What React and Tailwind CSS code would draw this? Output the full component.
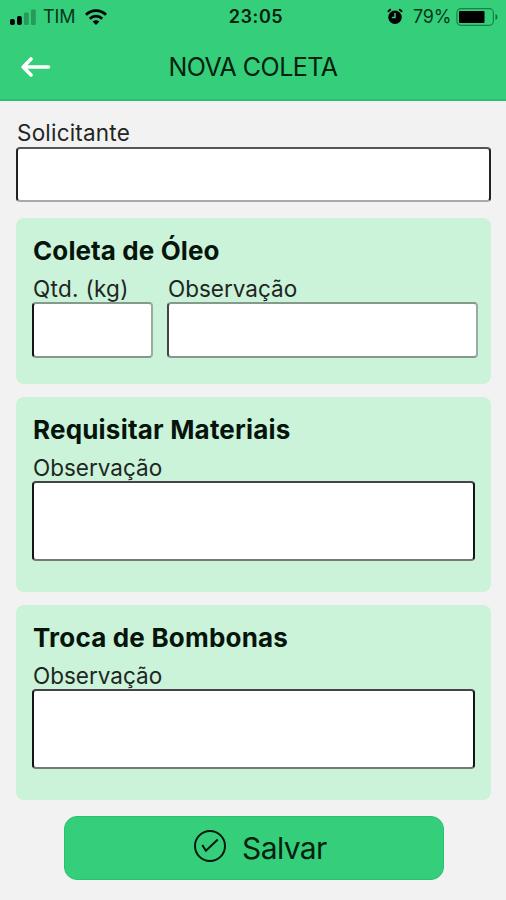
import React from "react";

const sections = [
  { title: "Requisitar Materiais", label: "Observação" },
  { title: "Troca de Bombonas", label: "Observação" },
];

function StatusBar() {
  return (
    <div className="h-[33px] grid grid-cols-3 items-center pl-[10px] pr-2">
      <div className="flex items-center h-8">
        <svg width="27" height="16" viewBox="0 0 27 16" className="shrink-0">
          <rect x="0" y="10" width="4.8" height="6" rx="1.8" />
          <rect x="7" y="7" width="4.8" height="9" rx="1.8" />
          <rect x="14" y="3.5" width="4.8" height="12.5" rx="1.2" opacity="0.25" />
          <rect x="21" y="0.5" width="4.8" height="15.5" rx="1.2" opacity="0.25" />
        </svg>
        <span className="ml-[6px] w-[33px] pt-px text-[18px] leading-8 tracking-[-0.1px] text-[#06371d]">TIM</span>
        <svg width="22" height="16" viewBox="0 0 22 16" className="ml-[9px] shrink-0" fill="none" stroke="#000" strokeWidth="2.7">
          <path d="M1 5.8 C6.5 0.2 15.5 0.2 21 5.8" />
          <path d="M4.8 9.7 C8.3 6.3 13.7 6.3 17.2 9.7" />
          <path d="M11 16 L7.6 12.5 C9.4 10.9 12.6 10.9 14.4 12.5 Z" fill="#000" stroke="none" />
        </svg>
      </div>
      <p className="pl-[4px] pt-px text-center text-[18px] leading-8 font-semibold tracking-[0.6px] text-[#04210f]">23:05</p>
      <div className="flex items-center justify-end h-8">
        <svg width="16" height="17" viewBox="0 0 16 17" className="shrink-0">
          <circle cx="8" cy="9.3" r="6.7" />
          <path d="M1.4 3.2 L3.2 1.7 M14.6 3.2 L12.8 1.7" stroke="#000" strokeWidth="1.9" strokeLinecap="round" />
          <path d="M8 5 V9.5 H4.8" fill="none" stroke="#35ce7a" strokeWidth="1.5" />
        </svg>
        <span className="ml-[10px] w-[39px] pt-px text-[18px] leading-8 tracking-[-0.2px] text-[#06371d]">79%</span>
        <svg width="42" height="18" viewBox="0 0 42 18" className="ml-[4px] shrink-0">
          <rect x="0.9" y="0.7" width="36.5" height="16.6" rx="4" fill="none" stroke="#148448" strokeWidth="1.2" />
          <rect x="3" y="3" width="25.5" height="12" rx="1" />
          <path d="M39.5 6 C42 7 42 11 39.5 12 Z" fill="#0b6b38" />
        </svg>
      </div>
    </div>
  );
}

function Header() {
  return (
    <header className="h-[101px] bg-[#35ce7a] border-b-2 border-[#2abf6d]">
      <StatusBar />
      <div className="h-[66px] grid grid-cols-[60px_1fr_60px] items-center">
        <svg width="30" height="20" viewBox="0 0 30 20" className="ml-[21px]" fill="none" stroke="#fff" strokeWidth="3.6" strokeLinecap="round" strokeLinejoin="round">
          <path d="M27.5 10 H2.5 M10 2 L2.2 10 L10 18" />
        </svg>
        <h1 className="pt-px text-center text-[25px] tracking-[-0.5px] leading-[67px] text-[#04210f]">NOVA COLETA</h1>
      </div>
    </header>
  );
}

function Label({ children }) {
  return <label className="block pl-px pt-px text-[22.5px] leading-[28px] h-[28px] text-[#1f2622]">{children}</label>;
}

export default function App() {
  return (
    <div className="w-[506px] h-[900px] overflow-hidden bg-[#f2f2f2] text-black font-['Inter',sans-serif]">
      <Header />

      <main className="px-4 pt-[17px]">
        <Label>
          <span className="tracking-[0.2px]">Solicitante</span>
        </Label>
        <input className="mt-px block w-[475px] h-[55px] bg-white border-2 border-t-[#555] border-b-[#aaa] border-x-[#222] rounded-[4px]" />

        {/* Coleta */}
        <section className="mt-4 w-[475px] h-[166px] pt-4 px-4 rounded-lg bg-[#caf3d9]">
          <h2 className="pl-px pt-px h-8 text-[26px] leading-8 font-bold tracking-[0.1px] text-[#07140c]">Coleta de Óleo</h2>
          <div className="mt-[8px] flex gap-[14px]">
            <div className="w-[121px]">
              <Label>
                <span className="tracking-[0.3px]">Qtd. (kg)</span>
              </Label>
              <input className="block w-[121px] h-[56px] bg-white border-2 border-y-[#859a8d] border-l-[#151515] border-r-[#9aaba0] rounded-[4px]" />
            </div>
            <div>
              <Label>Observação</Label>
              <input className="block w-[311px] h-[56px] bg-white border-2 border-y-[#859a8d] border-l-[#444] border-r-[#9aaba0] rounded-[4px]" />
            </div>
          </div>
        </section>

        {sections.map((s) => (
          <section key={s.title} className="mt-[13px] w-[475px] h-[195px] pt-4 px-4 rounded-lg bg-[#caf3d9]">
            <h2 className="pl-px pt-px h-8 text-[26px] leading-8 font-bold tracking-[0.2px] text-[#07140c]">{s.title}</h2>
            <div className="mt-[8px]">
              <Label>{s.label}</Label>
              <textarea className="block w-[443px] h-[80px] resize-none bg-white border-2 border-x-[#151515] border-t-[#444] border-b-[#777] rounded-[4px]" />
            </div>
          </section>
        ))}

        <button className="mt-4 ml-12 w-[380px] h-[64px] flex items-center rounded-[13px] bg-[#35ce7a] border border-[#28c26e]">
          <svg width="34" height="34" viewBox="0 0 34 34" className="ml-[128px] mb-[4px]" fill="none" stroke="#04180c" strokeWidth="2">
            <circle cx="17" cy="17" r="15" />
            <path d="M9.3 16 L12.9 21.8 L24.8 10.6" />
          </svg>
          <span className="ml-[15px] text-[30px] leading-[60px] tracking-[-0.6px] text-[#04210f]">Salvar</span>
        </button>
      </main>
    </div>
  );
}
